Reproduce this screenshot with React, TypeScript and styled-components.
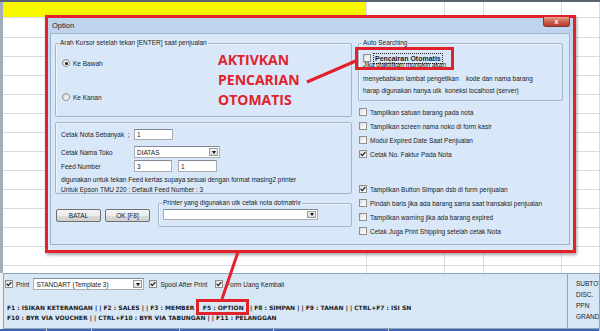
import * as React from 'react';
import styled, { createGlobalStyle } from 'styled-components';

const RED = '#e1222b';

const GlobalStyle = createGlobalStyle`
  html, body { margin: 0; padding: 0; background: #ffffff; }
  body { font-family: "Liberation Sans", Arial, sans-serif; color: #1b1b1b; }
`;

const Screen = styled.div`
    position: relative;
    width: 600px;
    height: 331px;
    overflow: hidden;
    background: #ffffff;
    display: flex;
    flex-direction: column;
`;

const TopStrip = styled.div`
    height: 2px;
    flex: none;
    background: #5b6570;
`;

const Grid = styled.div`
    height: 271px;
    flex: none;
    overflow: hidden;
    border-left: 3px solid #a3aeb9;
    display: flex;
    flex-direction: column;
`;

const Row = styled.div<{ $h: number }>`
    height: ${p => p.$h}px;
    flex: none;
    box-sizing: border-box;
    display: flex;
    border-bottom: 1px solid #d6dde5;
`;

const Cell = styled.div<{ $w?: number; $yellow?: boolean }>`
    ${p => (p.$w ? `width: ${p.$w}px; flex: none;` : 'flex: 1;')}
    box-sizing: border-box;
    border-right: 1px solid #d6dde5;
    background: ${p => (p.$yellow ? '#f7f700' : '#ffffff')};
`;

const BottomPanel = styled.div`
    height: 56px;
    flex: none;
    display: flex;
    padding-left: 3px;
    background: #eef2f6;
`;

const ShortcutArea = styled.div`
    width: 565px;
    box-sizing: border-box;
    background: #d8e7f6;
    border: 1px solid #8fa5bd;
    padding: 4px 0 0 1px;
    display: flex;
    flex-direction: column;
`;

const PrintRow = styled.div`
    height: 12px;
    display: flex;
    align-items: center;
    font-size: 6.5px;
    margin-bottom: 13px;
    white-space: nowrap;
`;

const Gap = styled.span<{ $w: number }>`
    width: ${p => p.$w}px;
    flex: none;
`;

const KeyLine = styled.div`
    font-family: "DejaVu Sans", Verdana, sans-serif;
    font-weight: bold;
    font-size: 6px;
    line-height: 10px;
    height: 10px;
    padding-left: 2px;
    white-space: nowrap;
    color: #1c1c1c;
`;

const TotalsArea = styled.div`
    flex: 1;
    box-sizing: border-box;
    background: #d8e7f6;
    border: 1px solid #8fa5bd;
    border-left: none;
    padding: 4px 0 0 8px;
    display: flex;
    flex-direction: column;
    font-size: 6.5px;
    white-space: nowrap;
    overflow: hidden;
    line-height: 11px;
`;

const BottomStrip = styled.div`
    flex: 1;
    display: flex;
    background: #3f65b1;
`;

const StripCell = styled.div<{ $w?: number }>`
    ${p => (p.$w ? `width: ${p.$w}px; flex: none;` : 'flex: 1;')}
    border-right: 1px solid #c7d3ea;
`;

/* dialog */

const Dialog = styled.div`
    position: absolute;
    left: 45px;
    top: 15px;
    width: 531px;
    height: 238px;
    box-sizing: border-box;
    border: 3px solid ${RED};
    background: linear-gradient(180deg, #bcd3ec 0%, #d2e2f4 45%, #dce8f6 100%);
    box-shadow: 1px 2px 3px rgba(0, 0, 0, 0.35);
    display: flex;
    flex-direction: column;
    padding: 0 3px 5px 2px;
`;

const TitleBar = styled.div`
    height: 15px;
    flex: none;
    display: flex;
    align-items: center;
    justify-content: space-between;
    font-size: 7.5px;
    color: #1e1e1e;
    padding-left: 2px;
`;

const CloseButton = styled.div`
    align-self: flex-start;
    margin-top: -1px;
    width: 27px;
    height: 10px;
    box-sizing: border-box;
    border: 1px solid #7d3a35;
    border-top: none;
    border-radius: 0 0 3px 3px;
    background: linear-gradient(180deg, #e6a392 0%, #cf6250 50%, #b53a2a 100%);
    color: #ffffff;
    font-size: 7px;
    font-weight: bold;
    display: flex;
    align-items: center;
    justify-content: center;
`;

const Client = styled.div`
    flex: 1;
    background: #d8e8f8;
    border: 1px solid #9eb4cb;
    display: grid;
    grid-template-columns: 297px 205px;
    column-gap: 6px;
    align-items: start;
    padding: 5px 0 0 4px;
    font-size: 6.5px;
`;

const Column = styled.div`
    display: flex;
    flex-direction: column;
`;

const Group = styled.fieldset<{ $h: number; $w?: number }>`
    margin: 0;
    padding: 0;
    min-width: 0;
    box-sizing: border-box;
    height: ${p => p.$h}px;
    ${p => (p.$w ? `width: ${p.$w}px;` : '')}
    border: 1px solid #a7b6c6;
    box-shadow: inset 1px 1px 0 #eef4fa;
    border-radius: 2px;
    display: flex;
    flex-direction: column;
`;

const Legend = styled.legend`
    font-size: 6.5px;
    line-height: 8px;
    padding: 0 1px;
    margin-left: 3px;
    white-space: nowrap;
`;

const Panel = styled.div<{ $h: number }>`
    box-sizing: border-box;
    height: ${p => p.$h}px;
    margin-top: 5px;
    border: 1px solid #a7b6c6;
    box-shadow: inset 1px 1px 0 #eef4fa;
    border-radius: 2px;
    padding: 6px 0 0 5px;
    display: flex;
    flex-direction: column;
`;

const OptionLine = styled.div<{ $top?: number; $h?: number; $indent?: number }>`
    display: flex;
    align-items: center;
    gap: 3px;
    height: ${p => p.$h ?? 10}px;
    margin-top: ${p => p.$top ?? 0}px;
    padding-left: ${p => p.$indent ?? 0}px;
    white-space: nowrap;
`;

const FieldRow = styled.div<{ $top?: number; $h: number }>`
    display: flex;
    align-items: center;
    height: ${p => p.$h}px;
    margin-top: ${p => p.$top ?? 0}px;
    white-space: nowrap;
`;

const FieldLabel = styled.span`
    width: 73px;
    flex: none;
`;

const Note = styled.div<{ $top?: number }>`
    line-height: 10px;
    margin-top: ${p => p.$top ?? 0}px;
    white-space: nowrap;
`;

const TextBox = styled.div<{ $w: number; $h?: number; $gap?: number }>`
    width: ${p => p.$w}px;
    height: ${p => p.$h ?? 12}px;
    margin-left: ${p => p.$gap ?? 0}px;
    box-sizing: border-box;
    flex: none;
    background: #ffffff;
    border: 1px solid #abadb3;
    border-top-color: #7f8a96;
    padding-left: 2px;
    display: flex;
    align-items: center;
    font-size: 6.5px;
    white-space: nowrap;
`;

const DropButton = styled.span`
    margin-left: auto;
    margin-right: 1px;
    width: 9px;
    height: calc(100% - 2px);
    box-sizing: border-box;
    border: 1px solid #9c9c9c;
    background: linear-gradient(180deg, #f7f7f7, #d9d9d9);
    display: flex;
    align-items: center;
    justify-content: center;
    &::after {
        content: '';
        border-left: 2.5px solid transparent;
        border-right: 2.5px solid transparent;
        border-top: 3px solid #111111;
    }
`;

const ButtonRow = styled.div`
    display: flex;
    align-items: flex-start;
    margin-top: 5px;
    height: 28px;
`;

const Button = styled.div<{ $gap?: number }>`
    width: 45px;
    height: 13px;
    margin-top: 10px;
    margin-left: ${p => p.$gap ?? 0}px;
    box-sizing: border-box;
    border: 1px solid #707070;
    border-radius: 2px;
    background: linear-gradient(180deg, #f4f4f4 0%, #ebebeb 50%, #dcdcdc 51%, #cfcfcf 100%);
    display: flex;
    align-items: center;
    justify-content: center;
    font-size: 6.5px;
`;

const PrinterBody = styled.div`
    padding: 2px 0 0 4px;
`;

const SearchBody = styled.div`
    padding: 6px 0 0 4px;
    display: flex;
    flex-direction: column;
`;

const FocusLabel = styled.span`
    font-weight: bold;
    font-size: 7px;
    padding: 0 1px;
    outline: 1px dotted #222222;
    line-height: 9px;
`;

const SearchNote = styled.div<{ $top?: number }>`
    line-height: 12.5px;
    margin-top: ${p => p.$top ?? 0}px;
    white-space: nowrap;
`;

const CheckList = styled.div`
    display: flex;
    flex-direction: column;
    margin-top: 4px;
    padding-left: 1px;
`;

const Spacer = styled.div<{ $h: number }>`
    height: ${p => p.$h}px;
`;

const Box = styled.span`
    width: 8px;
    height: 8px;
    flex: none;
    box-sizing: border-box;
    border: 1px solid #8e8f8f;
    background: linear-gradient(135deg, #d9dadb 0%, #f4f4f4 60%, #ffffff 100%);
    display: inline-flex;
    align-items: center;
    justify-content: center;
`;

const RadioDot = styled.span<{ $on?: boolean }>`
    width: 8px;
    height: 8px;
    flex: none;
    box-sizing: border-box;
    border-radius: 50%;
    border: 1px solid #8e8f8f;
    background: linear-gradient(135deg, #d9dadb, #ffffff);
    display: inline-flex;
    align-items: center;
    justify-content: center;
    &::after {
        content: '';
        width: 3px;
        height: 3px;
        border-radius: 50%;
        background: ${p => (p.$on ? '#1f1f1f' : 'transparent')};
    }
`;

const Callout = styled.div`
    position: absolute;
    left: 218px;
    top: 50px;
    font-family: "Open Sans", "Liberation Sans", sans-serif;
    font-weight: bold;
    font-size: 14px;
    line-height: 20px;
    color: ${RED};
    white-space: nowrap;
`;

const Marks = styled.svg`
    position: absolute;
    left: 0;
    top: 0;
    pointer-events: none;
`;

const Check = ({ on }: { on?: boolean }) => (
    <Box>
        {on && (
            <svg width="6" height="6" viewBox="0 0 6 6">
                <path d="M0.7 2.9 L2.3 4.6 L5.3 1.1" stroke="#1b1b1b" strokeWidth="1.3" fill="none" />
            </svg>
        )}
    </Box>
);

const columns = [364, 78, 39, 78, 0];

const options: { label: string; on?: boolean; gapBefore?: number }[] = [
    { label: 'Tampilkan satuan barang pada nota' },
    { label: 'Tampilkan screen nama noko di form kasir' },
    { label: 'Modul Expired Date Saat Penjualan' },
    { label: 'Cetak No. Faktur Pada Nota', on: true },
    { label: 'Tampilkan Button Simpan dsb di form penjualan', on: true, gapBefore: 21 },
    { label: 'Pindah baris jika ada barang sama saat transaksi penjualan' },
    { label: 'Tampilkan warning jika ada barang expired' },
    { label: 'Cetak Juga Print Shipping setelah cetak Nota' },
];

const App = () => {
    const rows = [20, ...Array(13).fill(19)];
    return (
        <>
            <GlobalStyle />
            <Screen>
                <TopStrip />
                <Grid>
                    <Row $h={16}>
                        {columns.map((w, i) => (
                            <Cell key={i} $w={w || undefined} $yellow={i === 0} />
                        ))}
                    </Row>
                    {rows.map((h, r) => (
                        <Row key={r} $h={h}>
                            {columns.map((w, i) => (
                                <Cell key={i} $w={w || undefined} />
                            ))}
                        </Row>
                    ))}
                </Grid>
                <BottomPanel>
                    <ShortcutArea>
                        <PrintRow>
                            <Check on />
                            <Gap $w={3} />
                            <span>Print</span>
                            <Gap $w={4} />
                            <TextBox $w={111}>
                                STANDART (Template 3)
                                <DropButton />
                            </TextBox>
                            <Gap $w={5} />
                            <Check on />
                            <Gap $w={3} />
                            <span>Spool After Print</span>
                            <Gap $w={8} />
                            <Check on />
                            <Gap $w={3} />
                            <span>Form Uang Kembali</span>
                        </PrintRow>
                        <KeyLine>
                            F1 : ISIKAN KETERANGAN | | F2 : SALES | | F3 : MEMBER | &nbsp;F5 : OPTION &nbsp;&nbsp;| F8 : SIMPAN | | F9 : TAHAN | | CTRL+F7 : ISI SN
                        </KeyLine>
                        <KeyLine>
                            F10 : BYR VIA VOUCHER | | CTRL+F10 : BYR VIA TABUNGAN | | F11 : PELANGGAN
                        </KeyLine>
                    </ShortcutArea>
                    <TotalsArea>
                        <span>SUBTOTAL</span>
                        <span>DISC.</span>
                        <span>PPN</span>
                        <span>GRANDTOTAL</span>
                    </TotalsArea>
                </BottomPanel>
                <BottomStrip>
                    <StripCell $w={46} />
                    <StripCell $w={44} />
                    <StripCell $w={87} />
                    <StripCell $w={93} />
                    <StripCell $w={114} />
                    <StripCell />
                </BottomStrip>

                <Dialog>
                    <TitleBar>
                        <span>Option</span>
                        <CloseButton>x</CloseButton>
                    </TitleBar>
                    <Client>
                        <Column>
                            <Group $h={78}>
                                <Legend>Arah Kursor setelah tekan [ENTER] saat penjualan</Legend>
                                <OptionLine $top={11} $indent={6}>
                                    <RadioDot $on />
                                    <span>Ke Bawah</span>
                                </OptionLine>
                                <OptionLine $top={24} $indent={6}>
                                    <RadioDot />
                                    <span>Ke Kanan</span>
                                </OptionLine>
                            </Group>
                            <Panel $h={72}>
                                <FieldRow $h={11}>
                                    <FieldLabel>Cetak Nota Sebanyak &nbsp;;</FieldLabel>
                                    <TextBox $w={39} $h={11}>1</TextBox>
                                </FieldRow>
                                <FieldRow $h={12} $top={6}>
                                    <FieldLabel>Cetak Nama Toko</FieldLabel>
                                    <TextBox $w={86}>
                                        DIATAS
                                        <DropButton />
                                    </TextBox>
                                </FieldRow>
                                <FieldRow $h={12} $top={2}>
                                    <FieldLabel>Feed Number</FieldLabel>
                                    <TextBox $w={38}>3</TextBox>
                                    <TextBox $w={39} $gap={6}>1</TextBox>
                                </FieldRow>
                                <Note $top={3}>
                                    digunakan untuk tekan Feed kertas supaya sesuai dengan format masing2 printer
                                </Note>
                                <Note>Untuk Epson TMU 220 : Default Feed Number : 3</Note>
                            </Panel>
                            <ButtonRow>
                                <Button $gap={1}>BATAL</Button>
                                <Button $gap={4}>OK [F8]</Button>
                                <Group $h={28} $w={194} style={{ marginLeft: 8 }}>
                                    <Legend>Printer yang digunakan utk cetak nota dotmatrix</Legend>
                                    <PrinterBody>
                                        <TextBox $w={155} $h={11}>
                                            <DropButton />
                                        </TextBox>
                                    </PrinterBody>
                                </Group>
                            </ButtonRow>
                        </Column>
                        <Column>
                            <Group $h={62}>
                                <Legend>Auto Searching</Legend>
                                <SearchBody>
                                    <OptionLine $h={10}>
                                        <Check />
                                        <FocusLabel>Pencairan Otomatis</FocusLabel>
                                    </OptionLine>
                                    <SearchNote $top={-4}>Jika diaktifkan mungkin akan</SearchNote>
                                    <SearchNote $top={1}>
                                        menyebabkan lambat pengetikan &nbsp;&nbsp;&nbsp;kode dan nama barang
                                    </SearchNote>
                                    <SearchNote>
                                        harap digunakan hanya utk &nbsp;koneksi localhost (server)
                                    </SearchNote>
                                </SearchBody>
                            </Group>
                            <CheckList>
                                {options.map((o, i) => (
                                    <React.Fragment key={i}>
                                        {o.gapBefore && <Spacer $h={o.gapBefore} />}
                                        <OptionLine $h={14}>
                                            <Check on={o.on} />
                                            <span>{o.label}</span>
                                        </OptionLine>
                                    </React.Fragment>
                                ))}
                            </CheckList>
                        </Column>
                    </Client>
                </Dialog>

                <Callout>
                    AKTIVKAN
                    <br />
                    PENCARIAN
                    <br />
                    OTOMATIS
                </Callout>

                <Marks width="600" height="331" viewBox="0 0 600 331">
                    <line x1="307" y1="82" x2="358" y2="60" stroke={RED} strokeWidth="3" />
                    <rect x="356.5" y="48.5" width="96" height="20" fill="none" stroke={RED} strokeWidth="3" />
                    <line x1="238" y1="252" x2="222" y2="299" stroke={RED} strokeWidth="3" />
                    <rect x="197.5" y="300.5" width="50" height="13" fill="none" stroke={RED} strokeWidth="3" />
                </Marks>
            </Screen>
        </>
    );
};

export default App;
